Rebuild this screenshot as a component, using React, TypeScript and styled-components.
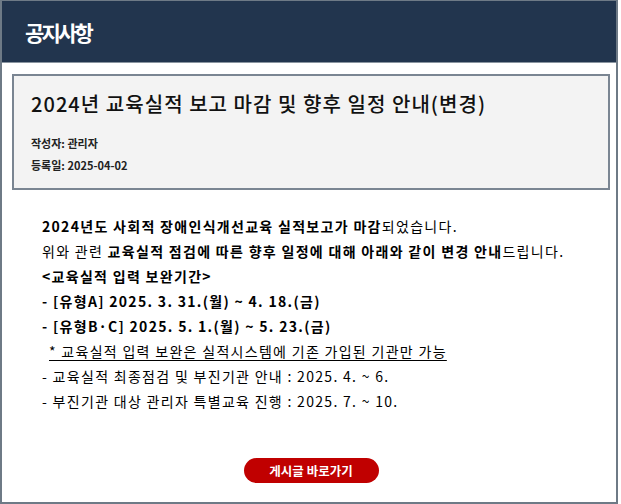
import * as React from 'react';
import styled, { createGlobalStyle } from 'styled-components';

const GlobalStyle = createGlobalStyle`
  html, body {
    margin: 0;
    padding: 0;
    background: #ffffff;
  }
  * {
    box-sizing: border-box;
  }
`;

const Panel = styled.div`
  width: 618px;
  height: 504px;
  border: 2px solid #6e7a86;
  border-top-width: 1px;
  background: #ffffff;
  display: flex;
  flex-direction: column;
  font-family: 'Noto Sans CJK KR', 'Noto Sans', sans-serif;
`;

const Header = styled.div`
  height: 62px;
  flex-shrink: 0;
  background: #22354e;
  border-bottom: 1px solid #8a95a0;
  display: flex;
  align-items: center;
  padding-left: 23px;
`;

const HeaderTitle = styled.h1`
  margin: 0;
  color: #ffffff;
  font-size: 21px;
  font-weight: 700;
  letter-spacing: -2.8px;
`;

const Content = styled.div`
  padding: 11px 6px 0 10px;
  display: flex;
  flex-direction: column;
`;

const TitleBox = styled.div`
  border: 2px solid #7a8592;
  background: #f3f3f3;
  padding: 14px 17px 12px;
`;

const PostTitle = styled.h2`
  margin: 0;
  font-size: 20px;
  line-height: 28px;
  font-weight: 500;
  letter-spacing: 1.05px;
  color: #111111;
`;

const MetaList = styled.div`
  margin-top: 14px;
  display: flex;
  flex-direction: column;
`;

const Meta = styled.div`
  font-size: 11px;
  line-height: 22px;
  font-weight: 700;
  color: #222222;
`;

const Body = styled.div`
  padding: 24px 0 0 30px;
  display: flex;
  flex-direction: column;
`;

const Line = styled.p<{ $indent?: number; $underline?: boolean; $bold?: boolean }>`
  margin: 0;
  font-size: 14px;
  line-height: 25px;
  color: #000000;
  white-space: pre;
  letter-spacing: 1.3px;
  padding-left: ${(p) => p.$indent ?? 0}px;
  font-weight: ${(p) => (p.$bold ? 700 : 400)};
  text-decoration: ${(p) => (p.$underline ? 'underline' : 'none')};
  text-underline-offset: 3px;
`;

const Strong = styled.b`
  font-weight: 700;
`;

const ButtonRow = styled.div`
  display: flex;
  justify-content: center;
  padding-top: 44px;
`;

const LinkButton = styled.button`
  width: 135px;
  height: 25px;
  border: none;
  border-radius: 13px;
  background: #c00000;
  color: #ffffff;
  font-family: 'Noto Sans CJK KR', 'Noto Sans', sans-serif;
  font-size: 12.5px;
  font-weight: 700;
  cursor: pointer;
  padding: 0;
`;

export default function App() {
  return (
    <>
      <GlobalStyle />
      <Panel>
        <Header>
          <HeaderTitle>공지사항</HeaderTitle>
        </Header>
        <Content>
          <TitleBox>
            <PostTitle>2024년 교육실적 보고 마감 및 향후 일정 안내(변경)</PostTitle>
            <MetaList>
              <Meta>작성자: 관리자</Meta>
              <Meta>등록일: 2025-04-02</Meta>
            </MetaList>
          </TitleBox>
          <Body>
            <Line>
              <Strong>2024년도 사회적 장애인식개선교육 실적보고가 마감</Strong>되었습니다.
            </Line>
            <Line>
              위와 관련 <Strong>교육실적 점검에 따른 향후 일정에 대해 아래와 같이 변경 안내</Strong>드립니다.
            </Line>
            <Line $bold>&lt;교육실적 입력 보완기간&gt;</Line>
            <Line $bold>- [유형A] 2025. 3. 31.(월) ~ 4. 18.(금)</Line>
            <Line $bold>- [유형B·C] 2025. 5. 1.(월) ~ 5. 23.(금)</Line>
            <Line $indent={7} $underline>* 교육실적 입력 보완은 실적시스템에 기존 가입된 기관만 가능</Line>
            <Line>- 교육실적 최종점검 및 부진기관 안내 : 2025. 4. ~ 6.</Line>
            <Line>- 부진기관 대상 관리자 특별교육 진행 : 2025. 7. ~ 10.</Line>
          </Body>
          <ButtonRow>
            <LinkButton>게시글 바로가기</LinkButton>
          </ButtonRow>
        </Content>
      </Panel>
    </>
  );
}
